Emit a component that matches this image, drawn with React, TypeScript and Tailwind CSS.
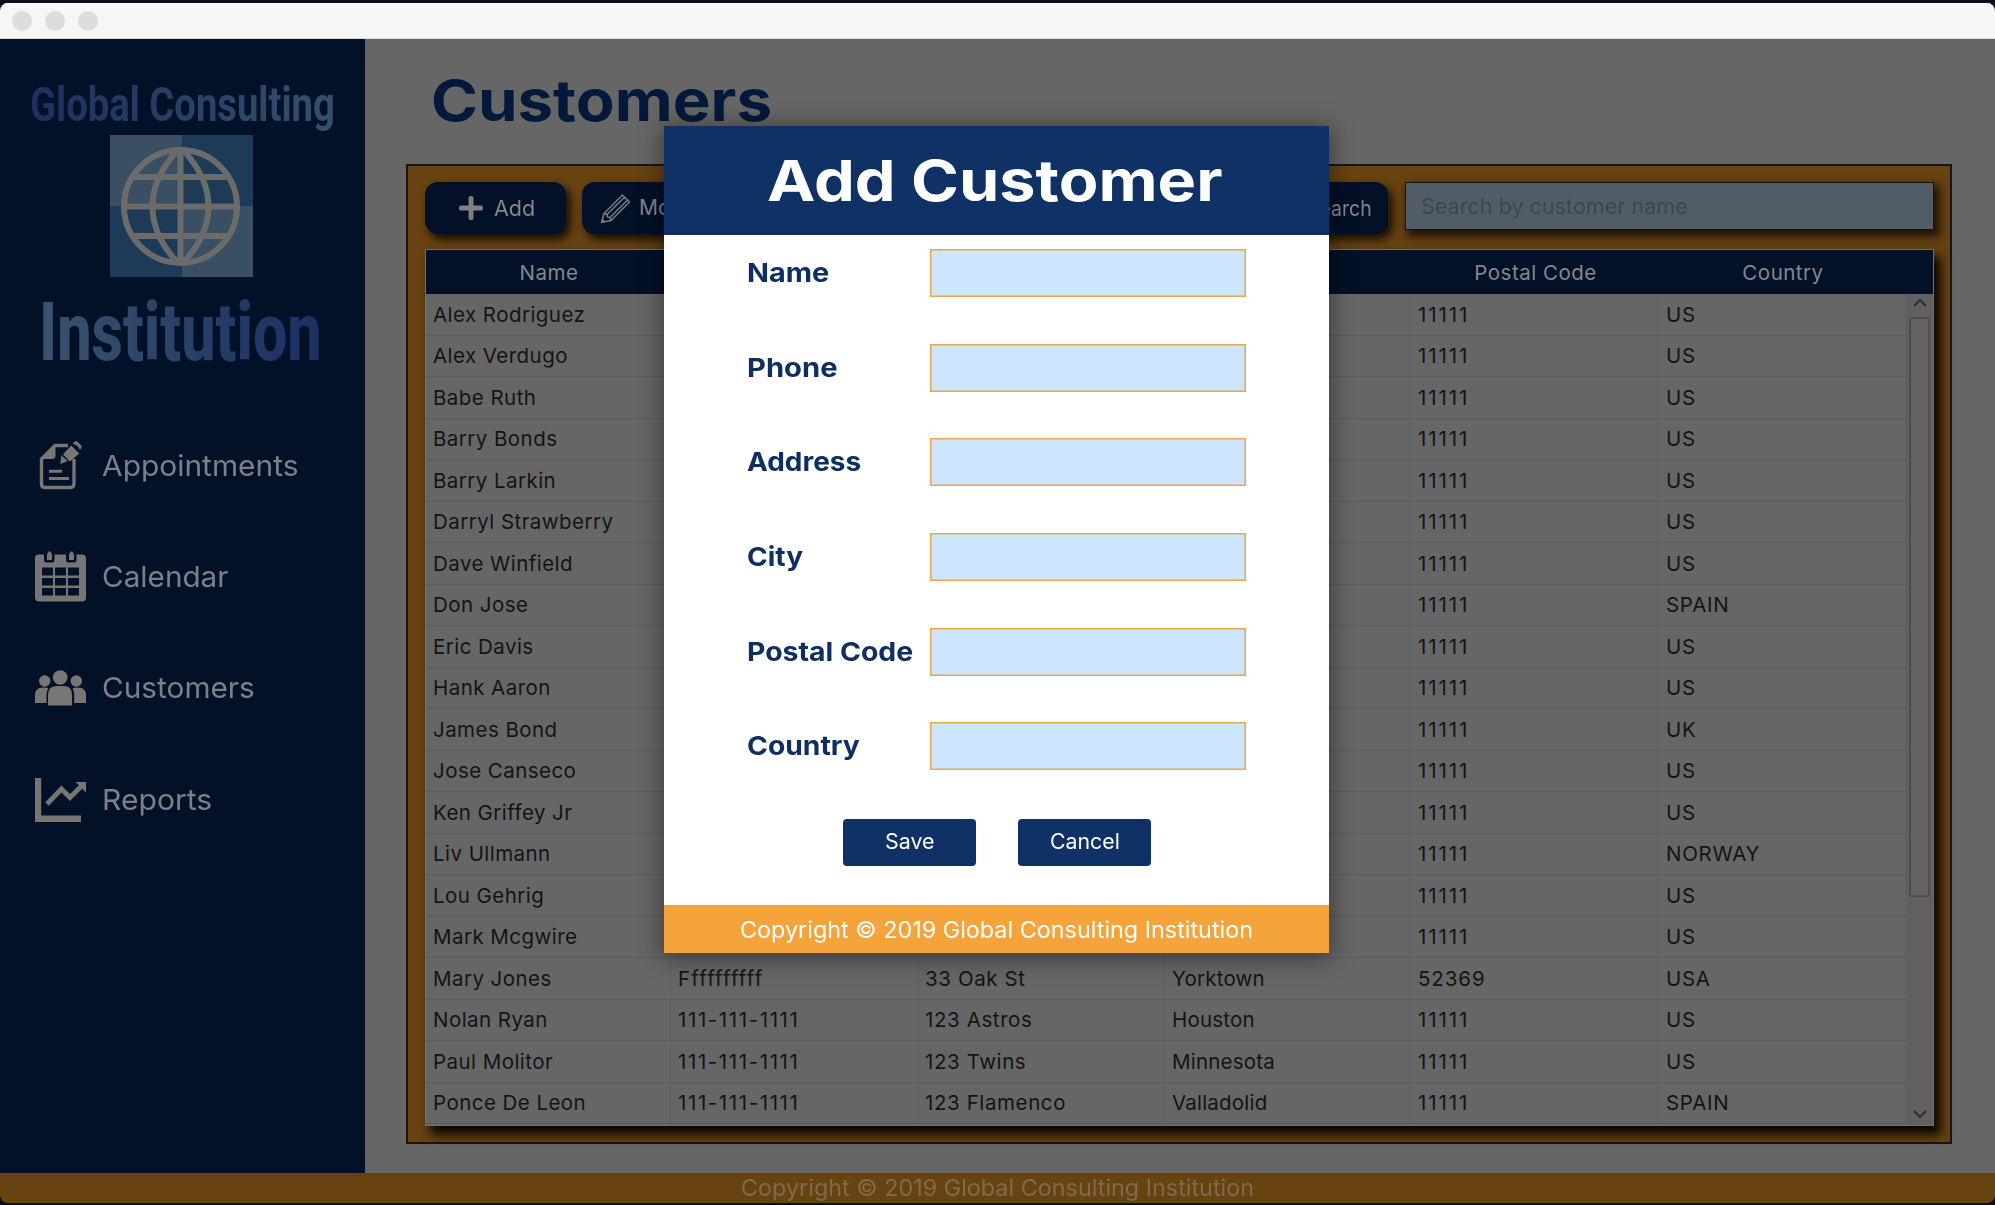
import { useLayoutEffect, useRef, type ReactNode } from "react";

/** Stretches a single line of text horizontally to fill its container. */
function Fit({ className, children }: { className: string; children: ReactNode }) {
  const outer = useRef<HTMLSpanElement>(null);
  const inner = useRef<HTMLSpanElement>(null);
  useLayoutEffect(() => {
    if (outer.current && inner.current) {
      inner.current.style.transform = `scaleX(${outer.current.clientWidth / inner.current.offsetWidth})`;
    }
  }, []);
  return (
    <span ref={outer} className={`block shrink-0 whitespace-nowrap leading-none ${className}`}>
      <span ref={inner} className="inline-block origin-left">
        {children}
      </span>
    </span>
  );
}

const rows: string[][] = [
  ["Alex Rodriguez", "", "", "", "11111", "US"],
  ["Alex Verdugo", "", "", "", "11111", "US"],
  ["Babe Ruth", "", "", "", "11111", "US"],
  ["Barry Bonds", "", "", "", "11111", "US"],
  ["Barry Larkin", "", "", "", "11111", "US"],
  ["Darryl Strawberry", "", "", "", "11111", "US"],
  ["Dave Winfield", "", "", "", "11111", "US"],
  ["Don Jose", "", "", "", "11111", "SPAIN"],
  ["Eric Davis", "", "", "", "11111", "US"],
  ["Hank Aaron", "", "", "", "11111", "US"],
  ["James Bond", "", "", "", "11111", "UK"],
  ["Jose Canseco", "", "", "", "11111", "US"],
  ["Ken Griffey Jr", "", "", "", "11111", "US"],
  ["Liv Ullmann", "", "", "", "11111", "NORWAY"],
  ["Lou Gehrig", "", "", "", "11111", "US"],
  ["Mark Mcgwire", "", "", "", "11111", "US"],
  ["Mary Jones", "Ffffffffff", "33 Oak St", "Yorktown", "52369", "USA"],
  ["Nolan Ryan", "111-111-1111", "123 Astros", "Houston", "11111", "US"],
  ["Paul Molitor", "111-111-1111", "123 Twins", "Minnesota", "11111", "US"],
  ["Ponce De Leon", "111-111-1111", "123 Flamenco", "Valladolid", "11111", "SPAIN"],
];

const headings = ["Name", "", "", "", "Postal Code", "Country"];

const cellTracking = [
  "tracking-[0.450px]",
  "tracking-[1.600px]",
  "tracking-[0.600px]",
  "tracking-[0.200px]",
  "tracking-[1.900px]",
  "tracking-[0.700px]",
];

function trackingFor(text: string, column: number) {
  if (text === "52369") return "tracking-[0.900px]";
  if (text.startsWith("Fff")) return "tracking-[1.150px]";
  return cellTracking[column];
}

function AppointmentIcon() {
  return (
    <svg viewBox="0 0 51 51" className="size-[51px]" fill="#787675">
      <path d="M33 5.500H20L6.500 19V44Q6.500 47.500 10 47.500H35.500Q39 47.500 39 44V19" fill="none" stroke="#787675" strokeWidth="3.400" />
      <path d="M20.500 6V15.500Q20.500 19 17 19H7z" />
      <path d="M14 29.800h13v3H14zM14 37h20v3H14z" />
      <path d="M36.200 5.500l8 8L35 21.500l-7-7zM37.800 3.700l2-2.200q1.200-1 2.500 0l4 4q1.200 1.200 0 2.500l-1.500 2q-1-4.500-7-6.300zM26.300 15.500l6.500 5.500-7.500 3z" />
    </svg>
  );
}
function CalendarIcon() {
  return (
    <svg viewBox="0 0 51 51" className="size-[51px]" fill="#787675">
      <path
        fillRule="evenodd"
        d="M4 3.500h5v5q0 3 2 3h6.500q2 0 2-3v-5h11.500v5q0 3 2 3h6.500q2 0 2-3v-5H47q4 0 4 4v39q0 4-4 4H4q-4 0-4-4v-39q0-4 4-4zM7 16.500v8h11v-8zM20 16.500v8h11v-8zM33 16.500v8h11v-8zM7 27v7.500h11V27zM20 27v7.500h11V27zM33 27v7.500h11V27zM7 37v7.500h11V37zM20 37v7.500h11V37zM33 37v7.500h11V37z"
      />
      <path d="M12 9V3.500L13.500.500h2L17 3.500V9zM34 9V3.500l1.500-3h2L39 3.500V9z" />
    </svg>
  );
}
function PeopleIcon() {
  return (
    <svg viewBox="0 0 51 51" className="size-[51px]" fill="#787675">
      <circle cx="25.200" cy="15.500" r="7.300" />
      <circle cx="9.700" cy="19" r="5.700" />
      <circle cx="41.300" cy="19" r="5.700" />
      <path d="M13 43.500V33q0-9 9-9h6.500q8.500 0 8.500 9v10.500z" />
      <path d="M0 41v-8q0-7.500 8-7.500 4 0 5.500.5Q11.500 29 11.500 32v9zM51 41v-8q0-7.500-8-7.500-4 0-5.500.5Q39.200 29 39.200 32v9z" />
    </svg>
  );
}
function ReportIcon() {
  return (
    <svg viewBox="0 0 51 51" className="size-[51px]" fill="#787675">
      <path d="M0 4h6.200v37.500H46V48H0z" />
      <path d="M12 30L26.500 15l8.500 8.500 11-11" fill="none" stroke="#787675" strokeWidth="4.800" />
      <path d="M40.500 8H51v10.500z" />
    </svg>
  );
}
function GlobeLogo() {
  return (
    <svg viewBox="0 0 143 142" className="h-[142px] w-[143px]">
      <path d="M0 0h72v71H0zM72 71h71v71H72z" fill="#3a4e64" />
      <path d="M72 0h71v71H72zM0 71h72v71H0z" fill="#1d3a57" />
      <g fill="none" stroke="#6b6b6c" strokeWidth="6">
        <circle cx="70.500" cy="71.500" r="56.500" />
        <path d="M70.500 15v113M14 71.500h113M24 42h93M24 101h93" />
        <path d="M68 15Q42.500 42 42.500 71.500T68 128M73 15Q98.500 42 98.500 71.500T73 128" />
      </g>
    </svg>
  );
}

const nav = [
  { label: "Appointments", width: "w-[197px]", icon: <AppointmentIcon /> },
  { label: "Calendar", width: "w-[127px]", icon: <CalendarIcon /> },
  { label: "Customers", width: "w-[153px]", icon: <PeopleIcon /> },
  { label: "Reports", width: "w-[110px]", icon: <ReportIcon /> },
];

const fields = [
  { label: "Name", width: "w-[82px]" },
  { label: "Phone", width: "w-[91px]" },
  { label: "Address", width: "w-[114px]" },
  { label: "City", width: "w-[56px]" },
  { label: "Postal Code", width: "w-[166px]" },
  { label: "Country", width: "w-[113px]" },
];

const toolButton =
  "flex h-[52px] items-center rounded-[13px] bg-[#021128] text-[21px] text-[#85878c] shadow-[4px_5px_9px_1px_rgba(0,0,0,0.75)]";
const columns = "grid grid-cols-[245px_247px_247px_246px_248px_247px]";

function Sidebar() {
  return (
    <aside className="flex w-[365px] flex-col bg-[#021128]">
      <div className="flex h-[371px] flex-col items-center">
        <Fit className="mt-[41px] w-[305px] font-['Roboto'] text-[49px] font-bold">
          <span className="inline-block bg-gradient-to-r from-[#1f2e5e] to-[#35506a] bg-clip-text pb-2 text-transparent">Global Consulting</span>
        </Fit>
        <div className="mr-[2px] mt-[-2px]">
          <GlobeLogo />
        </div>
        <Fit className="mr-[4px] mt-[15px] w-[283px] font-['Roboto'] text-[81px] font-extrabold">
          <span className="inline-block bg-gradient-to-r from-[#3a526c] to-[#1c2f62] bg-clip-text text-transparent">Institution</span>
        </Fit>
      </div>
      <nav className="flex flex-col gap-[60.200px] pl-[35px] pt-[30px]">
        {nav.map((n) => (
          <a key={n.label} className="flex h-[51px] items-center gap-[16px]">
            {n.icon}
            <Fit className={`text-[29px] text-[#7d8087] ${n.width}`}>{n.label}</Fit>
          </a>
        ))}
      </nav>
    </aside>
  );
}

function Toolbar() {
  return (
    <div className="flex h-[52px]">
      <button className={`${toolButton} w-[141px] pl-[34px]`}>
        <svg viewBox="0 0 24 24" className="mr-[11px] size-[24px]" fill="#808080">
          <path d="M9.500 1.500q0-1.500 2.500-1.500t2.500 1.500v8h8q1.500 0 1.500 2.500t-1.500 2.500h-8v8q0 1.500-2.500 1.500t-2.500-1.500v-8h-8Q0 14.500 0 12t1.500-2.500h8z" />
        </svg>
        <Fit className="w-[41px]">Add</Fit>
      </button>
      <button className={`${toolButton} ml-[16px] w-[150px] pl-[18px]`}>
        <svg viewBox="0 0 31 31" className="mr-[9px] size-[31px]" fill="none" stroke="#77797e" strokeWidth="1.600" strokeLinejoin="round">
          <path d="M1.500 29.500l2.500-9L22.500 2l7 7L11 27.500zM4 20.500l3 1 .5 2.500 2.500.5 1 3M7 21.500L25 3.800M10 24.500L27.500 7M1.500 29.500l3-1-2-2z" />
        </svg>
        <span className="-ml-px">Modify</span>
      </button>
      <button className={`${toolButton} ml-auto w-[141px] justify-end pr-[16px]`}>
        <Fit className="w-[65px]">Search</Fit>
      </button>
      <div className="ml-[17px] flex h-[48px] w-[529px] items-center border-[1.500px] border-[#11151b] bg-[#525c66] pl-[15px] shadow-[4px_5px_9px_2px_rgba(0,0,0,0.7)]">
        <Fit className="w-[267px] text-[21px] text-[#35485b]">Search by customer name</Fit>
      </div>
    </div>
  );
}

function CustomerTable() {
  return (
    <div className="mt-[15px] h-[877px] border border-[#70706c] bg-[#666666] text-[20.500px] leading-none shadow-[6px_8px_10px_1px_rgba(0,0,0,0.9)]">
      <div className={`${columns} h-[44px] items-center bg-[#021128] pt-[2px] text-center tracking-[0.500px] text-[#85878c]`}>
        {headings.map((h, i) => (
          <span key={i} className="pl-px">
            {h}
          </span>
        ))}
      </div>
      <div className="flex h-[831px]">
        <div className="w-[1480px] shrink-0">
          {rows.map((r) => (
            <div key={r[0]} className={`${columns} h-[41.530px] border-b border-[#5c5c5c] text-[#141414]`}>
              {r.map((c, i) => (
                <span key={i} className={`flex items-center border-r border-[#606060] pl-[7px] pt-px ${trackingFor(c, i)}`}>
                  {c}
                </span>
              ))}
            </div>
          ))}
        </div>
        <div className="flex flex-1 flex-col items-center bg-[#606063]">
          <svg viewBox="0 0 14 8" className="mt-[5px] h-[8px] w-[14px]" fill="none" stroke="#2c2c2e" strokeWidth="1.800">
            <path d="M1 7l6-6 6 6" />
          </svg>
          <div className="mt-[10px] h-[580px] w-[21px] rounded-[3px] border-2 border-[#4e4e51] bg-[#626265]" />
          <svg viewBox="0 0 14 8" className="mb-[7px] mt-auto h-[8px] w-[14px]" fill="none" stroke="#2c2c2e" strokeWidth="1.800">
            <path d="M1 1l6 6 6-6" />
          </svg>
        </div>
      </div>
    </div>
  );
}

function AddCustomerDialog() {
  return (
    <div className="absolute left-[664px] top-[126px] flex h-[827px] w-[665px] flex-col bg-white shadow-[0_3px_22px_3px_rgba(0,0,0,0.4)]">
      <header className="flex h-[109px] justify-center bg-[#0f3166] pr-[3px] pt-[26px] text-white">
        <Fit className="w-[456px] text-[57px] font-bold">Add Customer</Fit>
      </header>
      <div className="flex flex-col gap-[46.650px] pl-[83px] pt-[14px]">
        {fields.map((f) => (
          <label key={f.label} className="flex h-[48px] items-center">
            <span className="w-[183px]">
              <Fit className={`text-[26px] font-bold text-[#0f2f63] ${f.width}`}>{f.label}</Fit>
            </span>
            <span className="h-[48px] w-[316px] border-[1.500px] border-[#eba849] bg-[#cce6fd] shadow-[inset_0_0_0_0.500px_#eba849]" />
          </label>
        ))}
      </div>
      <div className="mt-[49px] flex gap-[42px] pl-[179px] text-[21px] text-white">
        <button className="flex h-[47px] w-[133px] items-center justify-center rounded-[4px] bg-[#0f3166] pb-[2px]">
          <Fit className="w-[50px]">Save</Fit>
        </button>
        <button className="flex h-[47px] w-[133px] items-center justify-center rounded-[4px] bg-[#0f3166] pb-[2px]">
          <Fit className="w-[70px]">Cancel</Fit>
        </button>
      </div>
      <footer className="mt-auto flex h-[48px] items-center justify-center bg-[#f4a43a] pt-[3px] text-white">
        <Fit className="w-[513px] text-[22.500px]">Copyright © 2019 Global Consulting Institution</Fit>
      </footer>
    </div>
  );
}

export default function App() {
  return (
    <div className="relative h-[1205px] w-[1995px] overflow-hidden bg-[#0b1020] pt-[3px] font-['Inter',sans-serif]">
      <div className="flex h-[1200px] flex-col overflow-hidden rounded-[8px]">
        <div className="flex h-[36px] shrink-0 items-center gap-[13px] border-b border-t border-b-[#dcdcdc] border-t-white bg-[#f6f6f6] pl-[12px]">
          <i className="size-[20px] rounded-full bg-[#dcdddc]" />
          <i className="size-[20px] rounded-full bg-[#dcdddc]" />
          <i className="size-[20px] rounded-full bg-[#dcdddc]" />
        </div>
        <div className="flex h-[1134px] shrink-0">
          <Sidebar />
          <main className="flex-1 bg-[#666666] pl-[41px] pr-[43px]">
            <h1 className="flex h-[125px] pl-[25px] pt-[33px]">
              <Fit className="w-[341px] text-[57px] font-bold text-[#03193b]">Customers</Fit>
            </h1>
            <section className="h-[980px] border-2 border-[#191510] bg-[#684312] pl-[17px] pr-[16px] pt-[16px]">
              <Toolbar />
              <CustomerTable />
            </section>
          </main>
        </div>
        <footer className="flex flex-1 justify-center bg-[#684312] pt-[4px]">
          <Fit className="w-[513px] text-[22.500px] text-[#82694a]">Copyright © 2019 Global Consulting Institution</Fit>
        </footer>
      </div>
      <AddCustomerDialog />
    </div>
  );
}
